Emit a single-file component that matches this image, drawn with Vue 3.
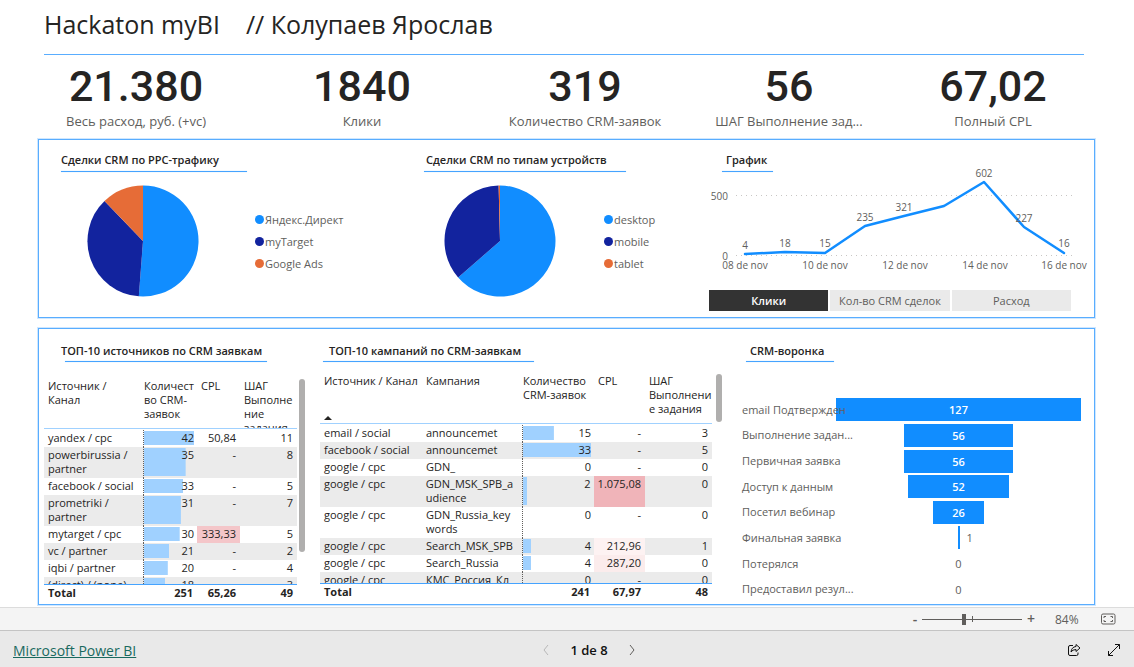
<script setup>
import { ref } from 'vue'

const kpis = [
  { value: '21.380', label: 'Весь расход, руб. (+vc)' },
  { value: '1840', label: 'Клики' },
  { value: '319', label: 'Количество CRM-заявок' },
  { value: '56', label: 'ШАГ Выполнение зад...' },
  { value: '67,02', label: 'Полный CPL' }
]

const BLUE = '#118dff'
const NAVY = '#12239e'
const ORANGE = '#e66c37'

const slicePath = (from, to) => {
  const point = (t) => {
    const a = t * 2 * Math.PI
    return `${(56 + 55.5 * Math.sin(a)).toFixed(2)} ${(56 - 55.5 * Math.cos(a)).toFixed(2)}`
  }
  return `M56 56 L${point(from)} A55.5 55.5 0 ${to - from > 0.5 ? 1 : 0} 1 ${point(to)} Z`
}

const pies = [
  {
    key: 'ppc',
    title: 'Сделки CRM по PPC-трафику',
    slices: [
      { name: 'Яндекс.Директ', color: BLUE, d: slicePath(0, 0.512) },
      { name: 'myTarget', color: NAVY, d: slicePath(0.512, 0.878) },
      { name: 'Google Ads', color: ORANGE, d: slicePath(0.878, 1) }
    ]
  },
  {
    key: 'device',
    title: 'Сделки CRM по типам устройств',
    slices: [
      { name: 'desktop', color: BLUE, d: slicePath(0, 0.636) },
      { name: 'mobile', color: NAVY, d: slicePath(0.636, 0.996) },
      { name: 'tablet', color: ORANGE, d: slicePath(0.996, 1) }
    ]
  }
]

const points = [
  { x: 45, y: 82, label: '4', ly: 76 },
  { x: 85, y: 80, label: '18', ly: 74 },
  { x: 125, y: 81, label: '15', ly: 74 },
  { x: 165, y: 54, label: '235', ly: 48 },
  { x: 204, y: 44, label: '321', ly: 38 },
  { x: 244, y: 34, label: '', ly: 0 },
  { x: 284, y: 10, label: '602', ly: 4 },
  { x: 324, y: 55, label: '227', ly: 49 },
  { x: 364, y: 81, label: '16', ly: 74 }
]
const linePoints = points.map((p) => `${p.x},${p.y}`).join(' ')
const days = [
  { x: 45, text: '08 de nov' },
  { x: 125, text: '10 de nov' },
  { x: 205, text: '12 de nov' },
  { x: 285, text: '14 de nov' },
  { x: 364, text: '16 de nov' }
]

const metrics = ['Клики', 'Кол-во CRM сделок', 'Расход']
const metric = ref('Клики')

const sources = [
  { name: ['yandex / cpc'], n: 42, cpl: '50,84', step: 11 },
  { name: ['powerbirussia /', 'partner'], n: 35, cpl: '-', step: 8 },
  { name: ['facebook / social'], n: 33, cpl: '-', step: 5 },
  { name: ['prometriki /', 'partner'], n: 31, cpl: '-', step: 7 },
  { name: ['mytarget / cpc'], n: 30, cpl: '333,33', step: 5, tone: 'mid' },
  { name: ['vc / partner'], n: 21, cpl: '-', step: 2 },
  { name: ['iqbi / partner'], n: 20, cpl: '-', step: 4 },
  { name: ['(direct) / (none)'], n: 18, cpl: '-', step: 3 }
]

const campaigns = [
  { source: 'email / social', name: ['announcemet'], n: 15, cpl: '-', step: 3 },
  { source: 'facebook / social', name: ['announcemet'], n: 33, cpl: '-', step: 5 },
  { source: 'google / cpc', name: ['GDN_'], n: 0, cpl: '-', step: 0 },
  { source: 'google / cpc', name: ['GDN_MSK_SPB_a', 'udience'], n: 2, cpl: '1.075,08', step: 0, tone: 'high' },
  { source: 'google / cpc', name: ['GDN_Russia_key', 'words'], n: 0, cpl: '-', step: 0 },
  { source: 'google / cpc', name: ['Search_MSK_SPB'], n: 4, cpl: '212,96', step: 1, tone: 'faint' },
  { source: 'google / cpc', name: ['Search_Russia'], n: 4, cpl: '287,20', step: 0, tone: 'low' },
  { source: 'google / cpc', name: ['КМС_Россия_Кл'], n: 0, cpl: '-', step: 0 }
]

const funnel = [
  { name: 'email Подтвержден', n: 127 },
  { name: 'Выполнение задан...', n: 56 },
  { name: 'Первичная заявка', n: 56 },
  { name: 'Доступ к данным', n: 52 },
  { name: 'Посетил вебинар', n: 26 },
  { name: 'Финальная заявка', n: 1 },
  { name: 'Потерялся', n: 0 },
  { name: 'Предоставил резул...', n: 0 }
]

const zoom = ref(42)
</script>

<template>
  <div class="page">
    <main class="report">
      <header class="head">
        <h1>Hackaton myBI&nbsp;&nbsp;&nbsp; // Колупаев Ярослав</h1>
      </header>

      <section class="kpis">
        <div v-for="k in kpis" :key="k.label" class="kpi">
          <div class="kpi-value">{{ k.value }}</div>
          <div class="kpi-label">{{ k.label }}</div>
        </div>
      </section>

      <section class="panel charts">
        <article v-for="p in pies" :key="p.key" :class="['pie-card', p.key]">
          <h2><span>{{ p.title }}</span></h2>
          <div class="pie-row">
            <svg class="pie" viewBox="0 0 112 112" role="img" :aria-label="p.title">
              <path v-for="s in p.slices" :key="s.name" :d="s.d" :fill="s.color" />
            </svg>
            <ul class="legend">
              <li v-for="s in p.slices" :key="s.name">
                <svg class="dot" viewBox="0 0 9 9"><circle cx="4.5" cy="4.5" r="4.5" :fill="s.color" /></svg>{{ s.name }}
              </li>
            </ul>
          </div>
        </article>

        <article class="graph-card">
          <h2><span>График</span></h2>
          <svg class="graph" viewBox="0 0 394 108" role="img" aria-label="График">
            <line class="rule" x1="36" x2="373" y1="23.5" y2="23.5" />
            <line class="rule" x1="36" x2="373" y1="83.5" y2="83.5" />
            <text class="end" x="28" y="28">500</text>
            <text class="end" x="28" y="88">0</text>
            <polyline :points="linePoints" />
            <text v-for="p in points" :key="p.x" :x="p.x" :y="p.ly + 1">{{ p.label }}</text>
            <text v-for="d in days" :key="d.text" :x="d.x" y="97">{{ d.text }}</text>
          </svg>
          <div class="tabs">
            <button
              v-for="m in metrics"
              :key="m"
              type="button"
              :class="{ active: m === metric }"
              :aria-pressed="m === metric"
              @click="metric = m"
            >{{ m }}</button>
          </div>
        </article>
      </section>

      <section class="panel tables">
        <article class="sources">
          <h2><span>ТОП-10 источников по CRM заявкам</span></h2>
          <div class="scroller">
            <table>
              <thead>
                <tr>
                  <th>Источник /<br>Канал</th>
                  <th>Количест<br>во CRM-<br>заявок<i class="sort down"></i></th>
                  <th>CPL</th>
                  <th>ШАГ<br>Выполне<br>ние<br>задания</th>
                </tr>
              </thead>
              <tbody>
                <tr v-for="r in sources" :key="r.name[0]">
                  <td><div v-for="l in r.name" :key="l">{{ l }}</div></td>
                  <td class="bar" :style="{ '--bar': (r.n / 42) * 100 + '%' }">{{ r.n }}</td>
                  <td :class="['num', r.tone]">{{ r.cpl }}</td>
                  <td class="num">{{ r.step }}</td>
                </tr>
              </tbody>
              <tfoot>
                <tr><td>Total</td><td class="num">251</td><td class="num">65,26</td><td class="num">49</td></tr>
              </tfoot>
            </table>
            <div class="thumb"></div>
          </div>
        </article>

        <article class="campaigns">
          <h2><span>ТОП-10 кампаний по CRM-заявкам</span></h2>
          <div class="scroller">
            <table>
              <thead>
                <tr>
                  <th>Источник / Канал<i class="sort up"></i></th>
                  <th>Кампания</th>
                  <th>Количество<br>CRM-заявок</th>
                  <th>CPL</th>
                  <th>ШАГ<br>Выполнени<br>е задания</th>
                </tr>
              </thead>
              <tbody>
                <tr v-for="(r, i) in campaigns" :key="i">
                  <td>{{ r.source }}</td>
                  <td><div v-for="l in r.name" :key="l">{{ l }}</div></td>
                  <td class="bar" :style="{ '--bar': (r.n / 33) * 100 + '%' }">{{ r.n }}</td>
                  <td :class="['num', r.tone]">{{ r.cpl }}</td>
                  <td class="num">{{ r.step }}</td>
                </tr>
              </tbody>
              <tfoot>
                <tr><td>Total</td><td></td><td class="num">241</td><td class="num">67,97</td><td class="num">48</td></tr>
              </tfoot>
            </table>
            <div class="thumb"></div>
          </div>
        </article>

        <article class="funnel-card">
          <h2><span>CRM-воронка</span></h2>
          <ul class="funnel">
            <li v-for="f in funnel" :key="f.name">
              <span class="step">{{ f.name }}</span>
              <span v-if="f.n > 1" class="track">
                <span class="fill" :style="{ width: (f.n / 127) * 100 + '%' }">{{ f.n }}</span>
              </span>
              <span v-else-if="f.n === 1" class="track single">
                <span></span><span class="fill"></span><span class="after">{{ f.n }}</span>
              </span>
              <span v-else class="track">{{ f.n }}</span>
            </li>
          </ul>
        </article>
      </section>
    </main>

    <div class="zoombar">
      <button type="button" class="sign minus" aria-label="Уменьшить">-</button>
      <div class="slider">
        <input v-model="zoom" type="range" min="0" max="100" aria-label="Масштаб">
      </div>
      <button type="button" class="sign" aria-label="Увеличить">+</button>
      <span class="percent">84%</span>
      <button type="button" class="fit" aria-label="По размеру страницы">
        <svg viewBox="0 0 15 12" width="15" height="12">
          <rect x="0.5" y="1" width="13.5" height="10" rx="1.5" />
          <path d="M3 5V3.5H5M9.5 3.5H11.5V5M11.5 7V8.5H9.5M5 8.5H3V7" />
        </svg>
      </button>
    </div>

    <footer class="foot">
      <div><a href="#">Microsoft Power BI</a></div>
      <nav class="pager">
        <button type="button" disabled aria-label="Назад">
          <svg viewBox="0 0 8 12" width="8" height="12"><path d="M6 1L2 6L6 11" /></svg>
        </button>
        <span>1 de 8</span>
        <button type="button" aria-label="Вперёд">
          <svg viewBox="0 0 8 12" width="8" height="12"><path d="M2 1L6 6L2 11" /></svg>
        </button>
      </nav>
      <div class="tools">
        <button type="button" aria-label="Поделиться">
          <svg viewBox="0 0 14 14" width="14" height="14">
            <path d="M6 2.500H3Q1.500 2.500 1.500 4V11Q1.500 12.500 3 12.500H9.500Q11 12.500 11 11V9.500" />
            <path d="M9 1.500L13 5L9 8.500V6.500Q5.500 6.500 4 9Q4.500 4 9 3.500Z" />
          </svg>
        </button>
        <button type="button" aria-label="Полный экран">
          <svg viewBox="0 0 14 14" width="14" height="14">
            <path d="M1.500 12.500L12.500 1.500M8 1.500H12.500V6M1.500 8V12.500H6" />
          </svg>
        </button>
      </div>
    </footer>
  </div>
</template>

<style>
body {
  margin: 0;
}
</style>

<style scoped>
.page {
  display: flex;
  flex-direction: column;
  min-height: 100vh;
  background: #fff;
  color: #252423;
  font-family: "Open Sans", "Noto Sans", sans-serif;
  font-size: 11px;
}
.report {
  flex: 1;
  padding: 0 39px 2px 38px;
}
h1,
h2,
ul {
  margin: 0;
  padding: 0;
  list-style: none;
}
button {
  margin: 0;
  padding: 0;
  border: 0;
  background: none;
  font: inherit;
  color: inherit;
}
.head {
  margin: 0 11px 0 6px;
  padding: 7px 0 13px;
  border-bottom: 1px solid #59adff;
}
h1 {
  font-size: 25px;
  font-weight: 400;
  line-height: 34px;
}
.kpis {
  display: grid;
  grid-template-columns: 196fr 256fr 190fr 218fr 190fr 7fr;
  padding: 7px 0 8px;
  text-align: center;
}
.kpi-value {
  font-family: Roboto, sans-serif;
  font-size: 43px;
  font-weight: 500;
  line-height: 48px;
}
.kpi-label {
  margin-top: 1px;
  color: #605e5c;
  font-size: 13px;
  line-height: 20px;
  white-space: nowrap;
}
.panel {
  display: grid;
  border: 1px solid #59adff;
  outline: 1px solid #cfe7ff;
}
.charts {
  grid-template-columns: 363fr 298fr 394fr;
  margin-bottom: 10px;
}
h2 {
  font-size: 11px;
  font-weight: 600;
  line-height: 20px;
  white-space: nowrap;
}
h2::after {
  content: "";
  display: block;
  height: 1px;
  background: #45a3ff;
  box-shadow: 0 0 1px #8cc6ff;
}
.charts h2::after {
  margin-top: 1px;
}
.pie-card {
  padding: 10px 0 20px 22px;
}
.ppc h2 {
  width: 186px;
}
.device h2 {
  width: 202px;
}
.device span {
  padding-left: 2px;
}
.pie-row {
  display: flex;
  align-items: center;
  margin-top: 13px;
  padding-left: 26px;
}
.device .pie-row {
  padding-left: 20px;
}
.pie {
  width: 112px;
  height: 112px;
}
.legend {
  margin-left: 56px;
  padding-top: 1px;
  color: #605e5c;
  line-height: 22px;
}
.device .legend {
  margin-left: 48px;
}
.legend li {
  display: flex;
  align-items: center;
  gap: 1px;
}
.dot {
  width: 9px;
  height: 9px;
}
.graph-card {
  padding: 10px 0 6px;
}
.graph-card h2 {
  width: 51px;
  margin-left: 22px;
}
.graph-card h2 span {
  padding-left: 4px;
}
.graph {
  display: block;
  width: 100%;
  overflow: visible;
}
.graph text {
  fill: #605e5c;
  font-size: 10px;
  text-anchor: middle;
}
.graph text.end {
  text-anchor: end;
}
.graph polyline {
  fill: none;
  stroke: #118dff;
  stroke-width: 2.5;
  stroke-linejoin: round;
  stroke-linecap: round;
}
.rule {
  stroke: #c8c6c4;
  stroke-dasharray: 1 4;
}
.tabs {
  display: grid;
  grid-template-columns: repeat(3, 1fr);
  gap: 2px;
  margin: 10px 23px 0 9px;
}
.tabs button {
  background: #eaeaea;
  color: #605e5c;
  line-height: 21px;
}
.tabs button.active {
  background: #333;
  color: #fff;
  font-weight: 600;
}
.tables {
  grid-template-columns: 270fr 419fr 366fr;
}
.tables article {
  padding-top: 12px;
}
.sources h2 {
  width: 206px;
  margin-left: 22px;
}
.sources h2::after {
  margin-left: 4px;
}
.campaigns h2 {
  width: 211px;
  margin-left: 14px;
}
.campaigns h2 span {
  padding-left: 6px;
}
.scroller {
  display: flex;
  align-items: flex-start;
}
.sources .scroller {
  gap: 2px;
  margin: 17px 4px 0 5px;
}
.campaigns .scroller {
  gap: 4px;
  margin: 12px 6px 0 11px;
}
.thumb {
  width: 6px;
  height: 173px;
  border-radius: 3px;
  background: #b0afae;
}
.campaigns .thumb {
  height: 48px;
}
table {
  display: block;
  flex: 1;
  min-width: 0;
  line-height: 14px;
}
thead,
tbody,
tfoot {
  display: block;
  overflow: hidden;
}
tr {
  display: grid;
}
.sources tr {
  grid-template-columns: 96fr 57fr 43fr 57fr;
}
.campaigns tr {
  grid-template-columns: 102fr 97fr 75fr 51fr 67fr;
}
thead {
  height: 49px;
  border-bottom: 1px solid #a0d1ff;
}
thead tr {
  height: 49px;
}
th {
  position: relative;
  padding: 0 0 0 4px;
  font-weight: 400;
  text-align: left;
  white-space: nowrap;
}
.sort {
  position: absolute;
  bottom: 3px;
  left: 4px;
  border: 4px solid transparent;
}
.sort.down {
  bottom: -1px;
  border-top-color: #252423;
}
.sort.up {
  border-bottom-color: #252423;
}
tbody {
  height: 154px;
  padding-top: 1px;
}
.campaigns tbody {
  height: 158px;
}
tbody tr:nth-child(even) {
  background: #ebebeb;
}
td {
  padding: 1px 4px 2px;
  white-space: nowrap;
}
.num,
.bar {
  text-align: right;
}
.bar {
  padding-right: 3px;
  background-image: linear-gradient(#a0d1ff, #a0d1ff), repeating-linear-gradient(#605e5c 0 1px, transparent 1px 2px);
  background-origin: content-box, padding-box;
  background-position: 0 0, 3px 0;
  background-repeat: no-repeat;
  background-size: var(--bar) 100%, 1px 100%;
}
.high {
  background: #f0b4b9;
}
.mid {
  background: #f4c6c9;
}
.low {
  background: #fbecec;
}
.faint {
  background: #fdf2f2;
}
tfoot {
  border-top: 1px solid #45a3ff;
  font-weight: 700;
}
.funnel-card h2 {
  width: 88px;
  margin-left: 18px;
}
.funnel-card h2 span {
  padding-left: 4px;
}
.funnel {
  display: grid;
  grid-auto-rows: 1fr;
  height: 205px;
  margin: 35px 13px 2px 14px;
  color: #605e5c;
}
.funnel li {
  display: grid;
  grid-template-columns: 94px 1fr;
  align-items: center;
}
.step {
  z-index: 1;
  width: 0;
  padding-bottom: 1px;
  white-space: nowrap;
}
.track {
  display: grid;
  place-items: center;
}
.fill {
  background: #118dff;
  color: #fff;
  font-weight: 600;
  line-height: 23px;
  text-align: center;
}
.single {
  grid-template-columns: 1fr 2px 1fr;
}
.single .fill {
  width: 2px;
  height: 23px;
}
.after {
  justify-self: start;
  padding-left: 7px;
}
.zoombar {
  display: flex;
  align-items: center;
  justify-content: flex-end;
  height: 22px;
  padding-right: 18px;
  border-top: 1px solid #dcdcdc;
  border-bottom: 1px solid #c4c4c4;
  background: #f4f4f4;
  color: #605e5c;
}
.sign {
  width: 18px;
  font-size: 14px;
  font-weight: 600;
  line-height: 20px;
}
.minus {
  width: 14px;
}
.slider {
  display: flex;
  width: 100px;
  background: linear-gradient(#605e5c, #605e5c) 50px 50% / 1px 6px no-repeat;
}
.slider input {
  width: 100%;
  height: 11px;
  margin: 0;
  appearance: none;
  background: linear-gradient(#605e5c, #605e5c) 0 50% / 100% 1px no-repeat;
}
.slider input::-webkit-slider-thumb {
  appearance: none;
  width: 4px;
  height: 11px;
  background: #605e5c;
}
.percent {
  width: 44px;
  padding-left: 15px;
  box-sizing: border-box;
  margin-right: 17px;
  font-size: 12px;
}
.fit {
  display: flex;
}
svg {
  flex: none;
}
.fit svg,
.foot svg {
  display: block;
  fill: none;
  stroke: #605e5c;
}
.foot {
  display: grid;
  grid-template-columns: 542fr 94px 498fr;
  align-items: center;
  height: 36px;
  padding-top: 2px;
  box-sizing: border-box;
  background: #e9e9e9;
  color: #111;
}
.foot a {
  margin-left: 13px;
  color: #19695f;
  font-size: 14px;
}
.pager {
  display: flex;
  align-items: center;
  justify-content: space-between;
  font-size: 13px;
  font-weight: 600;
}
.pager button[disabled] svg {
  stroke: #b8b8b8;
}
.tools {
  display: flex;
  justify-content: flex-end;
  gap: 26px;
  padding-right: 13px;
}
.tools svg {
  stroke: #111;
}
</style>
